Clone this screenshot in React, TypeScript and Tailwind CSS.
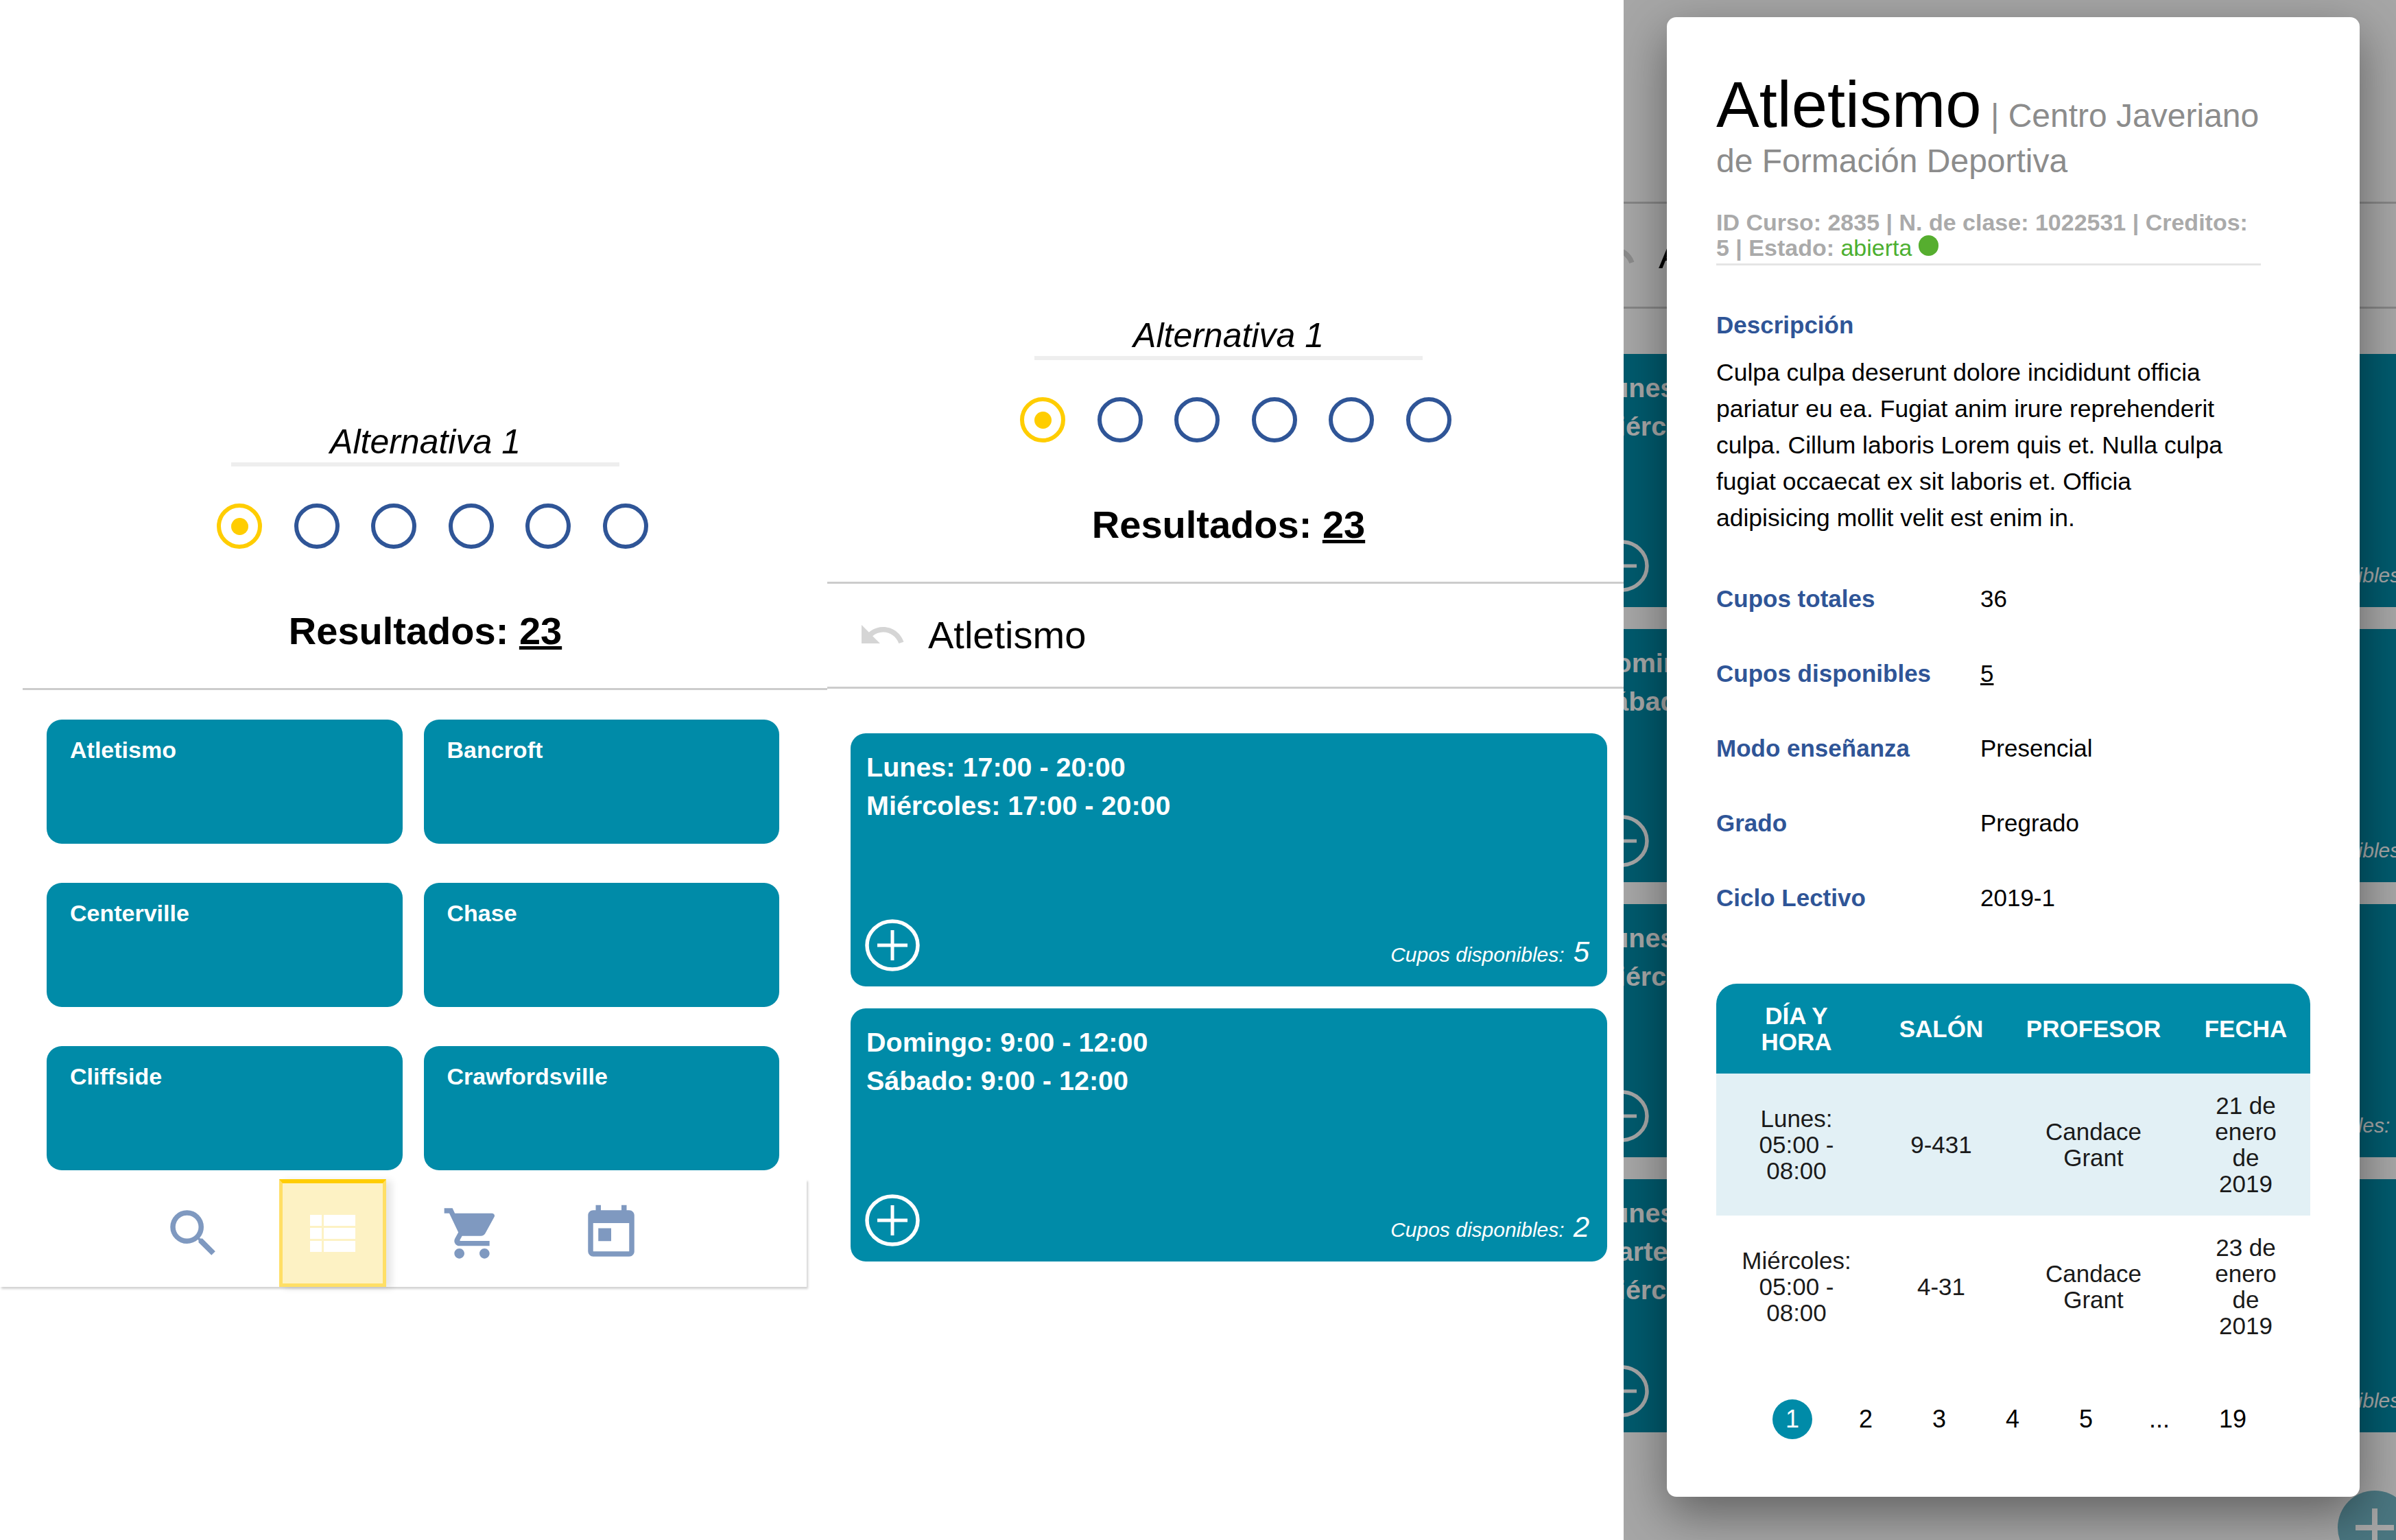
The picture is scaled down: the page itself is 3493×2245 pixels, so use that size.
import { MdAdd, MdSearch, MdShoppingCart, MdToday, MdUndo } from 'react-icons/md'

const courses = ['Atletismo', 'Bancroft', 'Centerville', 'Chase', 'Cliffside', 'Crawfordsville']

const sections = [
  { lines: ['Lunes: 17:00 - 20:00', 'Miércoles: 17:00 - 20:00'], seats: '5' },
  { lines: ['Domingo: 9:00 - 12:00', 'Sábado: 9:00 - 12:00'], seats: '2' },
]

const behindSections = [
  { lines: ['Lunes: 17:00 - 20:00', 'Miércoles: 17:00 - 20:00'], seats: '5' },
  { lines: ['Domingo: 9:00 - 12:00', 'Sábado: 9:00 - 12:00'], seats: '2' },
  { lines: ['Lunes: 7:00 - 10:00', 'Miércoles: 7:00 - 10:00'], seats: '12' },
  { lines: ['Lunes: 9:00 - 12:00', 'Martes: 9:00 - 12:00', 'Miércoles: 9:00 - 12:00'], seats: '3' },
]

const facts = [
  { label: 'Cupos totales', value: '36' },
  { label: 'Cupos disponibles', value: '5', underline: true },
  { label: 'Modo enseñanza', value: 'Presencial' },
  { label: 'Grado', value: 'Pregrado' },
  { label: 'Ciclo Lectivo', value: '2019-1' },
]

const schedule = [
  { day: 'Lunes: 05:00 - 08:00', room: '9-431', date: '21 de enero de 2019', tint: true },
  { day: 'Miércoles: 05:00 - 08:00', room: '4-31', date: '23 de enero de 2019', tint: false },
]

function AddIcon() {
  return (
    <svg width="80" height="76" viewBox="0 0 80 76" fill="none" stroke="currentColor">
      <ellipse cx="40" cy="38" rx="37" ry="35" strokeWidth="5.5" />
      <path d="M40 16v44M18 38h44" strokeWidth="5" />
    </svg>
  )
}

function ListIcon() {
  return (
    <svg width="66" height="54" viewBox="0 0 66 54" fill="currentColor">
      <path d="M0 0h17v16H0zM20 0h46v16H20zM0 19h17v16H0zM20 19h46v16H20zM0 38h17v16H0zM20 38h46v16H20z" />
    </svg>
  )
}

function AlternativeHeader({ className }: { className: string }) {
  return (
    <div className={`flex w-[566px] flex-col ${className}`}>
      <p className="border-b-[6px] border-[#eeeeee] text-center text-[50px] leading-[60px] text-black italic">Alternativa 1</p>
      <div className="mt-[54px] -ml-[21px] flex w-[640px] gap-[46.5px]">
        <span className="flex h-[66px] w-[66px] items-center justify-center rounded-full border-[6px] border-[#ffcd00]">
          <span className="h-[25px] w-[25px] rounded-full bg-[#ffcd00]" />
        </span>
        {[1, 2, 3, 4, 5].map(n => (
          <span key={n} className="h-[66px] w-[66px] rounded-full border-[6px] border-[#2f5597]" />
        ))}
      </div>
      <p className="mt-[88px] text-center text-[56px] leading-[64px] font-bold text-black">
        Resultados: <span className="underline">23</span>
      </p>
    </div>
  )
}

function BackRow() {
  return (
    <div className="flex h-[150px] items-center gap-[31px] pl-[44px]">
      <MdUndo size={72} className="text-[#d5d5d5]" />
      <span className="text-[56px] text-black">Atletismo</span>
    </div>
  )
}

function SectionCard({ lines, seats }: { lines: string[]; seats: string }) {
  return (
    <div className="flex h-[369px] flex-col justify-between rounded-[22px] bg-[#008ba8] pt-[21px] pr-[26px] pb-[22px] pl-[23px] text-white">
      <div className="text-[39.5px] leading-[56px] font-bold">
        {lines.map(line => (
          <p key={line}>{line}</p>
        ))}
      </div>
      <div className="-ml-[2px] flex items-end justify-between">
        <AddIcon />
        <p className="mb-[-3px] flex items-baseline gap-[13px]">
          <span className="text-[30px] italic">Cupos disponibles:</span>
          <span className="text-[42px] italic">{seats}</span>
        </p>
      </div>
    </div>
  )
}

function BottomNav() {
  return (
    <div className="mt-[13px] flex h-[157px] w-[1176px] items-center gap-[47px] pl-[204px] shadow-[2px_3px_3px_rgba(0,0,0,0.18)]">
      <div className="flex h-[156px] w-[156px] items-center justify-center text-[#7f99c0]">
        <MdSearch size={90} />
      </div>
      <div className="flex h-[157px] w-[156px] items-center justify-center border-[5px] border-t-[6px] border-[#ffdf66] border-t-[#ffcd00] bg-[#fdf2c4] text-white shadow-[8px_2px_10px_rgba(0,0,0,0.1)]">
        <ListIcon />
      </div>
      <div className="flex h-[156px] w-[156px] items-center justify-center text-[#7f99c0]">
        <MdShoppingCart size={88} />
      </div>
      <div className="flex h-[156px] w-[156px] items-center justify-center text-[#7f99c0]">
        <MdToday size={90} />
      </div>
    </div>
  )
}

function CourseDetail() {
  return (
    <div className="absolute top-[25px] left-[63px] h-[2157px] w-[1010px] rounded-[14px] bg-white pt-[95px] pl-[72px] shadow-[0_24px_70px_rgba(0,0,0,0.42)]">
      <h1 className="w-[794px] text-[48px] leading-[66px] font-normal text-[#8c8c8c]">
        <span className="text-[94px] text-black">Atletismo</span> | Centro Javeriano de Formación Deportiva
      </h1>
      <p className="mt-[38px] w-[794px] border-b-[3px] border-[#e5e5e5] pb-[4px] text-[34px] leading-[37px] font-bold text-[#aaaaaa]">
        ID Curso: 2835 | N. de clase: 1022531 | Creditos: 5 | Estado: <span className="font-normal text-[#4caf30]">abierta</span>{' '}
        <span className="inline-block h-[30px] w-[29px] rounded-full bg-[#56ae2f]" />
      </p>

      <h2 className="mt-[60px] text-[35px] leading-[53px] font-bold text-[#2f5597]">Descripción</h2>
      <p className="mt-[17px] w-[770px] text-[35.5px] leading-[53px] text-black">
        Culpa culpa deserunt dolore incididunt officia pariatur eu ea. Fugiat anim irure reprehenderit culpa. Cillum laboris
        Lorem quis et. Nulla culpa fugiat occaecat ex sit laboris et. Officia adipisicing mollit velit est enim in.
      </p>

      <dl className="mt-[64px] flex flex-col gap-[56px]">
        {facts.map(fact => (
          <div key={fact.label} className="flex text-[35px] leading-[53px]">
            <dt className="w-[385px] font-bold text-[#2f5597]">{fact.label}</dt>
            <dd className={fact.underline ? 'text-black underline' : 'text-black'}>{fact.value}</dd>
          </div>
        ))}
      </dl>

      <div className="mt-[99px] w-[866px] text-center text-[35px] leading-[38px]">
        <div className="grid h-[131px] grid-cols-[234px_188px_256px_188px] items-center rounded-t-[30px] bg-[#008ba8] font-bold text-white">
          <span className="px-[30px]">DÍA Y HORA</span>
          <span className="px-[20px]">SALÓN</span>
          <span className="px-[20px]">PROFESOR</span>
          <span className="px-[20px]">FECHA</span>
        </div>
        {schedule.map(row => (
          <div
            key={row.room}
            className={`grid h-[207px] grid-cols-[234px_188px_256px_188px] items-center text-[#1a1a1a] ${row.tint ? 'bg-[#e2f0f5]' : 'bg-white'}`}
          >
            <span className="px-[30px]">{row.day}</span>
            <span className="px-[20px]">{row.room}</span>
            <span className="px-[20px]">Candace Grant</span>
            <span className="px-[38px]">{row.date}</span>
          </div>
        ))}
      </div>

      <div className="mt-[61px] ml-[82px] flex gap-[49px] text-center text-[36px] leading-[58px] text-black">
        <span className="h-[58px] w-[58px] rounded-full bg-[#008ba8] text-white">1</span>
        {['2', '3', '4', '5', '...', '19'].map(page => (
          <span key={page} className="w-[58px]">
            {page}
          </span>
        ))}
      </div>
    </div>
  )
}

export default function App() {
  return (
    <div className="flex h-[2245px] w-[3493px] overflow-hidden bg-white font-['Liberation_Sans',Arial,sans-serif]">
      {/* Search results */}
      <div className="w-[1206px] shrink-0 pt-[614px]">
        <AlternativeHeader className="ml-[337px]" />
        <div className="mt-[51px] ml-[33px] border-t-[3px] border-[#cccccc] pt-[43px] pl-[35px]">
          <div className="grid w-[1068px] grid-cols-2 gap-x-[31px] gap-y-[57px]">
            {courses.map(course => (
              <div key={course} className="h-[181px] rounded-[22px] bg-[#008ba8] pt-[24px] pl-[34px] text-[34px] leading-[40px] font-bold text-white">
                {course}
              </div>
            ))}
          </div>
        </div>
        <BottomNav />
      </div>

      {/* Sections of a course */}
      <div className="w-[1161px] shrink-0 pt-[459px]">
        <AlternativeHeader className="ml-[302px]" />
        <div className="mt-[51px] border-y-[3px] border-[#cccccc]">
          <BackRow />
        </div>
        <div className="mt-[65px] ml-[34px] flex w-[1103px] flex-col gap-[32px]">
          {sections.map(section => (
            <SectionCard key={section.seats} {...section} />
          ))}
        </div>
      </div>

      {/* Course detail over a dimmed screen */}
      <div className="relative h-[2245px] w-[1126px] shrink-0 overflow-hidden pt-[294px]">
        <div className="border-y-[3px] border-[#cccccc]">
          <div className="-ml-[96px]">
            <BackRow />
          </div>
        </div>
        <div className="mt-[66px] -ml-[64px] flex w-[1267px] flex-col gap-[32px]">
          {behindSections.map(section => (
            <SectionCard key={section.seats} {...section} />
          ))}
        </div>
        <div className="absolute top-[2173px] left-[1041px] flex h-[108px] w-[108px] items-center justify-center rounded-full bg-[#72b6c5] text-white">
          <MdAdd size={96} />
        </div>
        <div className="absolute inset-0 bg-black/35" />
        <CourseDetail />
      </div>
    </div>
  )
}
